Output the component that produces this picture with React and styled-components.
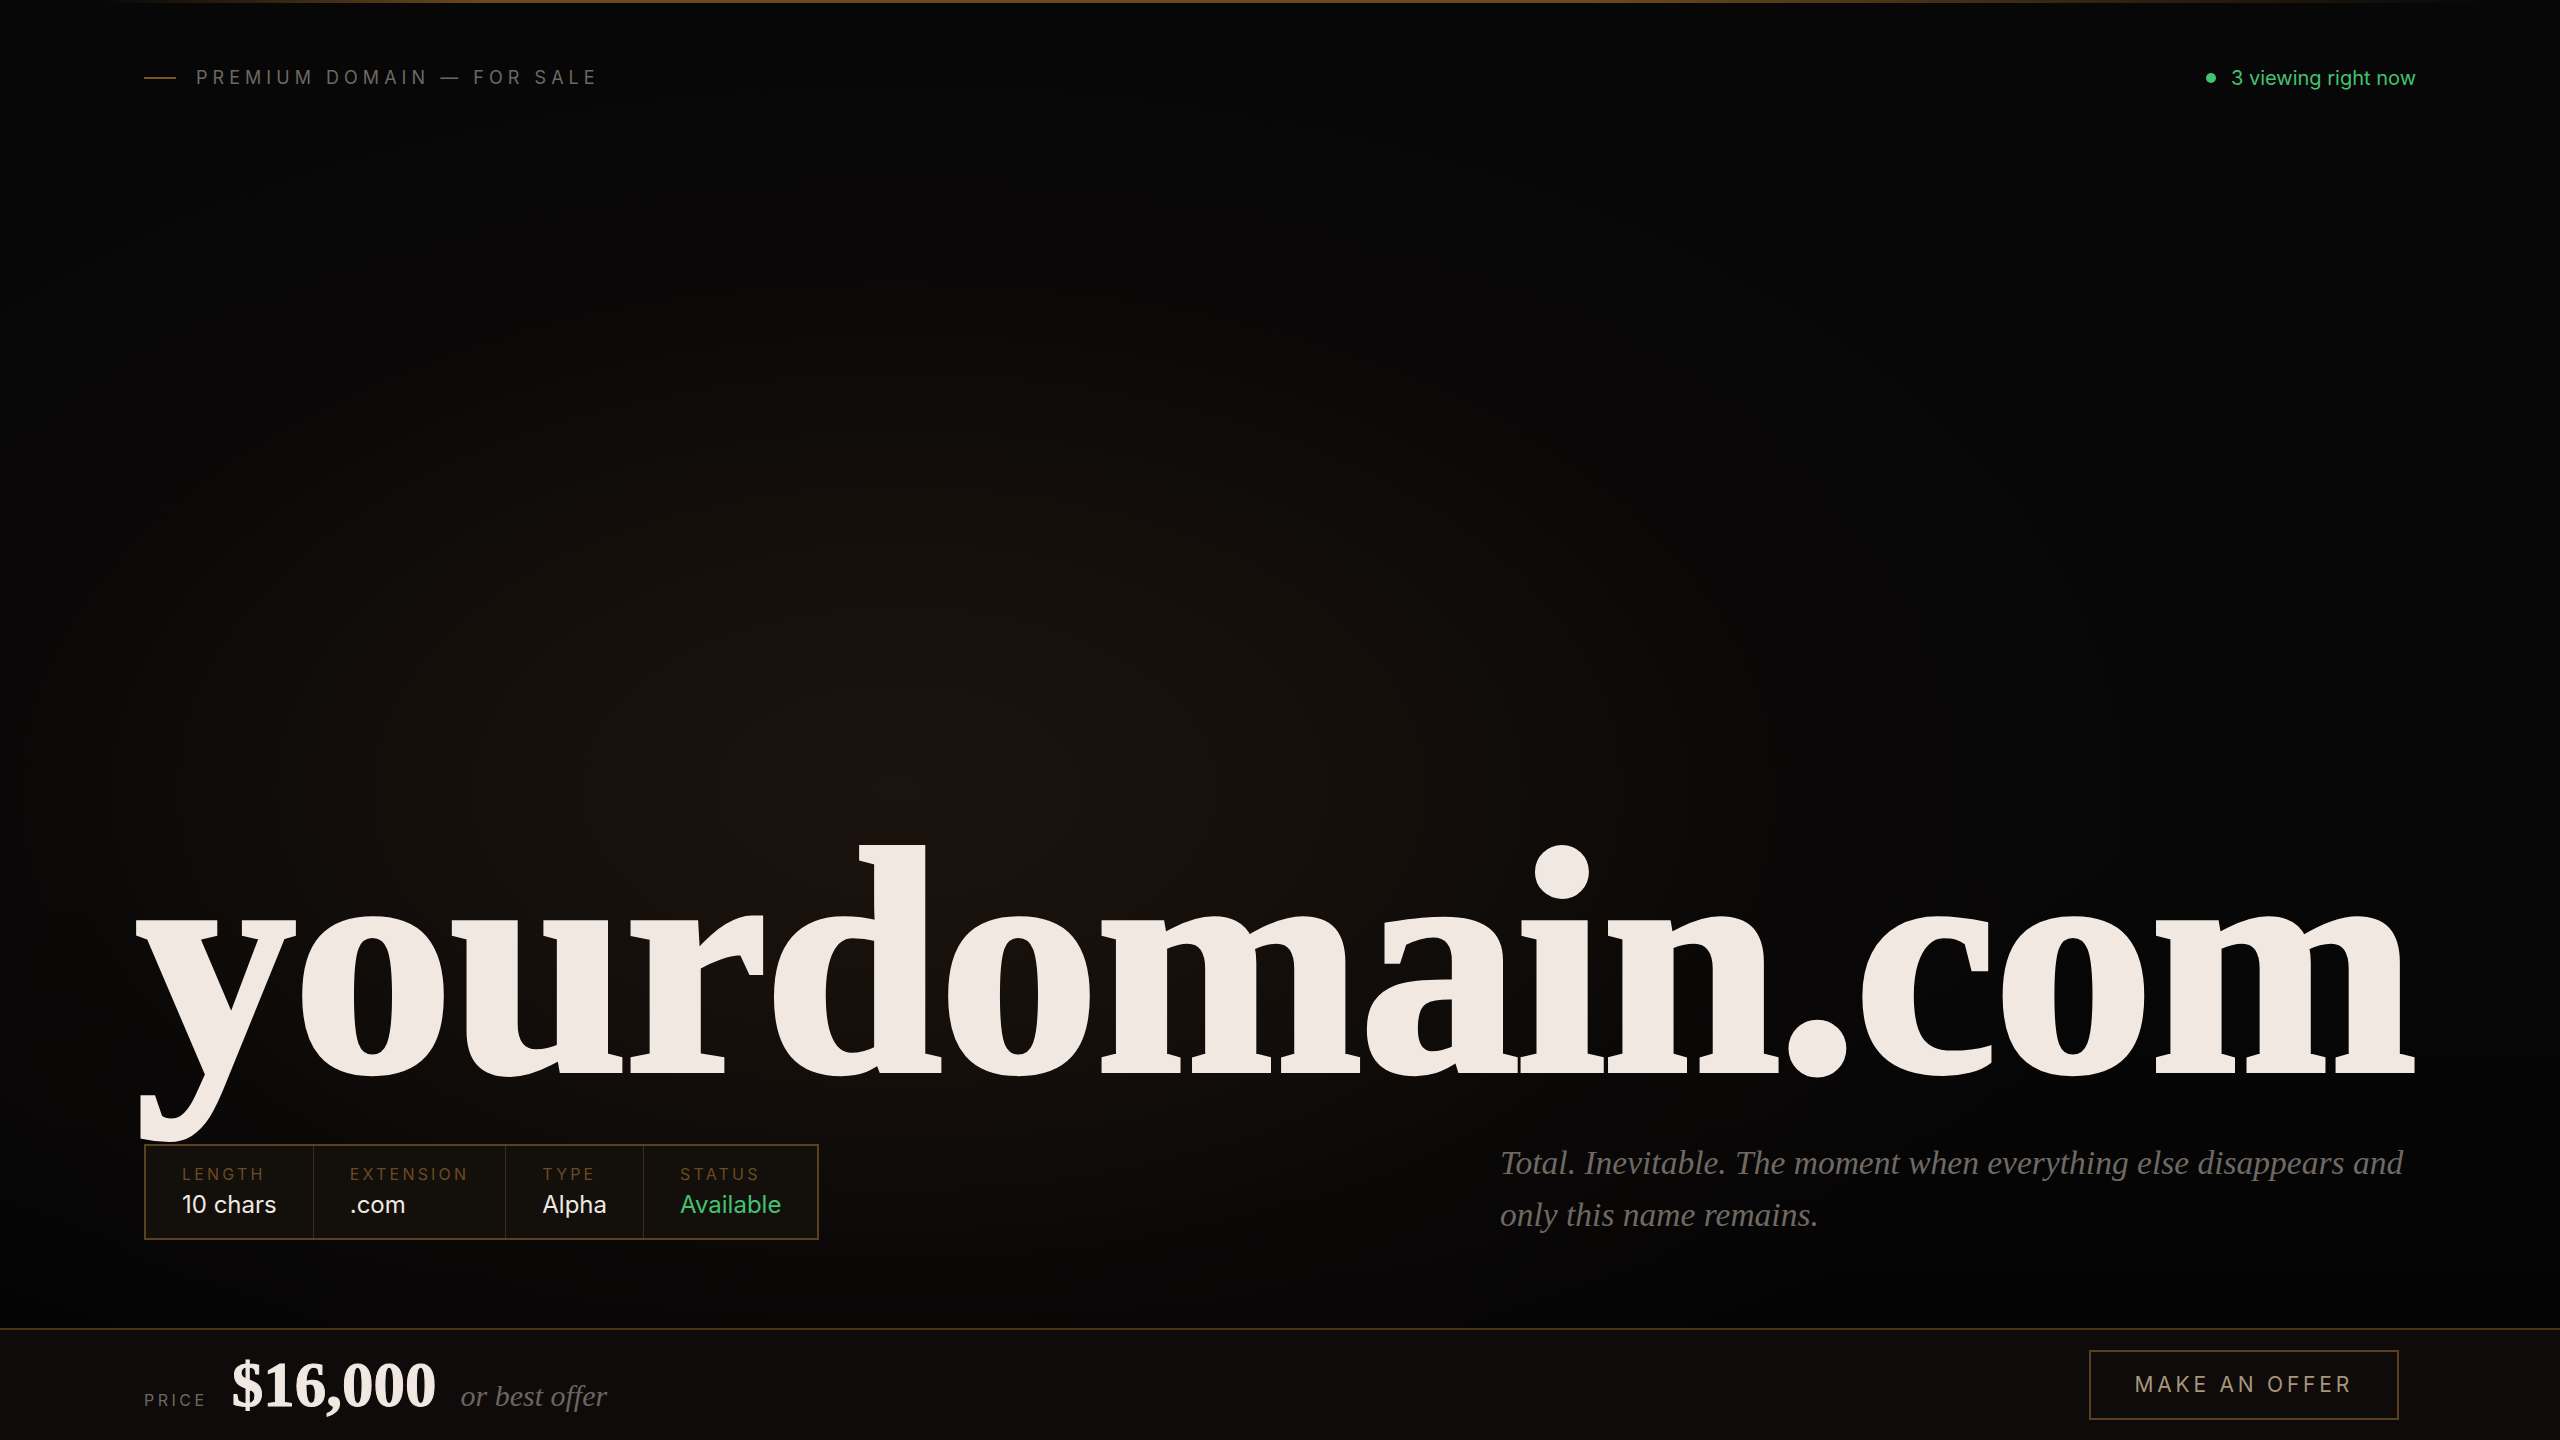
import React from "react";
import styled, { createGlobalStyle } from "styled-components";

const Global = createGlobalStyle`
  html, body { margin: 0; padding: 0; background: #080707; }
  body { font-family: Inter, "Liberation Sans", sans-serif; -webkit-font-smoothing: antialiased; }
  * { box-sizing: border-box; }
`;

const Page = styled.div`
  position: relative;
  min-height: 100vh;
  display: flex;
  flex-direction: column;
  overflow: hidden;
  background:
    radial-gradient(ellipse 1250px 720px at 900px 790px, #1b130d 0%, #150f0b 35%, rgba(11, 9, 8, 0.65) 70%, rgba(8, 7, 7, 0) 100%),
    linear-gradient(180deg, #080707 0%, #080707 60%, #040303 100%);

  &::before {
    content: "";
    position: absolute;
    top: 0;
    left: 0;
    right: 0;
    height: 3px;
    background: linear-gradient(90deg, rgba(107, 74, 30, 0) 4%, #6b4a1e 19%, #6b4a1e 62%, rgba(107, 74, 30, 0) 97%);
  }
`;

const Header = styled.header`
  display: flex;
  justify-content: space-between;
  align-items: center;
  padding: 67px 144px 0;
  line-height: 22px;
`;

const Eyebrow = styled.div`
  display: flex;
  align-items: center;
  gap: 20px;
  font-size: 18px;
  letter-spacing: 0.28em;
  text-transform: uppercase;
  color: #6e6862;
`;

const Dash = styled.span`
  display: block;
  width: 32px;
  height: 2px;
  background: #7a5522;
`;

const Live = styled.div`
  display: flex;
  align-items: center;
  gap: 15px;
  font-size: 20px;
  color: #43c272;
`;

const Dot = styled.span`
  display: block;
  width: 10px;
  height: 10px;
  border-radius: 50%;
  background: #43c272;
`;

const Hero = styled.main`
  flex: 1;
  display: flex;
  flex-direction: column;
  justify-content: flex-end;
  padding: 0 144px 87px;
`;

const Domain = styled.h1`
  margin: 0 0 15px -8px;
  font-family: "Liberation Serif", "Times New Roman", serif;
  font-weight: 700;
  font-size: 320px;
  line-height: 1;
  letter-spacing: -3px;
  color: #f0e8e1;
  -webkit-text-stroke: 6px #f0e8e1;
  white-space: nowrap;
`;

const Row = styled.div`
  display: flex;
  justify-content: space-between;
  align-items: flex-start;
`;

const InfoBox = styled.div`
  display: flex;
  margin-top: 7px;
  border: 2px solid #5a4020;
  background: #130f0b;
`;

const Cell = styled.div`
  display: flex;
  flex-direction: column;
  gap: 6px;
  padding: 18px 36px;
  & + & { border-left: 1px solid #3d2c17; }
`;

const Label = styled.span`
  font-size: 16px;
  line-height: 20px;
  letter-spacing: 0.2em;
  text-transform: uppercase;
  color: #6b4a22;
`;

const Value = styled.span`
  font-size: 24px;
  line-height: 30px;
  color: ${(p) => p.$color || "#f0e8e1"};
`;

const Tagline = styled.p`
  margin: 0;
  width: 916px;
  font-family: "Liberation Serif", "Times New Roman", serif;
  font-style: italic;
  font-size: 33.5px;
  line-height: 52px;
  color: #6f6964;
`;

const Bar = styled.footer`
  display: flex;
  justify-content: space-between;
  align-items: center;
  height: 112px;
  padding: 0 161px 0 144px;
  background: #0e0b0a;
  border-top: 2px solid #4a3419;
`;

const PriceGroup = styled.div`
  display: flex;
  align-items: baseline;
  gap: 24px;
`;

const PriceLabel = styled.span`
  font-size: 16px;
  letter-spacing: 0.22em;
  text-transform: uppercase;
  color: #6e6862;
`;

const Price = styled.span`
  font-family: "Liberation Serif", "Times New Roman", serif;
  font-weight: 700;
  font-size: 63px;
  line-height: 1;
  color: #f0e8e1;
  -webkit-text-stroke: 1px #f0e8e1;
`;

const OrBest = styled.span`
  font-family: "Liberation Serif", "Times New Roman", serif;
  font-style: italic;
  font-size: 30px;
  color: #6b6560;
`;

const OfferButton = styled.button`
  background: transparent;
  border: 2px solid #5a4020;
  color: #a8957a;
  font-family: Inter, "Liberation Sans", sans-serif;
  font-size: 21px;
  line-height: 24px;
  letter-spacing: 0.18em;
  text-transform: uppercase;
  padding: 21px 44px;
  cursor: pointer;
`;

const specs = [
  { label: "Length", value: "10 chars" },
  { label: "Extension", value: ".com" },
  { label: "Type", value: "Alpha" },
  { label: "Status", value: "Available", color: "#43c272" },
];

export default function App() {
  return (
    <>
      <Global />
      <Page>
        <Header>
          <Eyebrow>
            <Dash />
            Premium Domain — For Sale
          </Eyebrow>
          <Live>
            <Dot />
            3 viewing right now
          </Live>
        </Header>
        <Hero>
          <Domain>yourdomain.com</Domain>
          <Row>
            <InfoBox>
              {specs.map((s) => (
                <Cell key={s.label}>
                  <Label>{s.label}</Label>
                  <Value $color={s.color}>{s.value}</Value>
                </Cell>
              ))}
            </InfoBox>
            <Tagline>
              Total. Inevitable. The moment when everything else disappears and only this name remains.
            </Tagline>
          </Row>
        </Hero>
        <Bar>
          <PriceGroup>
            <PriceLabel>Price</PriceLabel>
            <Price>$16,000</Price>
            <OrBest>or best offer</OrBest>
          </PriceGroup>
          <OfferButton>Make an Offer</OfferButton>
        </Bar>
      </Page>
    </>
  );
}
